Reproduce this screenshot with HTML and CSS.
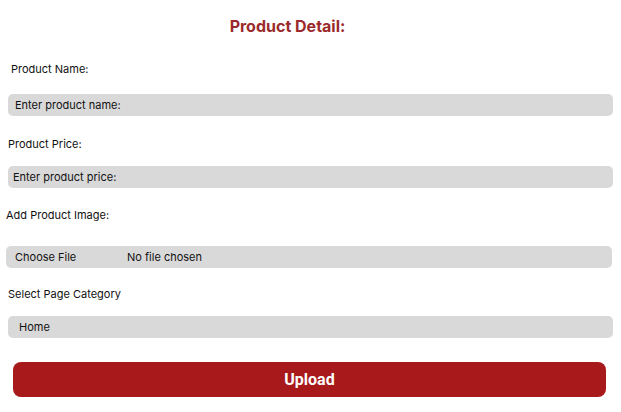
FILE: index.html
```html
<!DOCTYPE html>
<html>
<head>
<meta charset="utf-8">
<link rel="stylesheet" href="styles.css">
</head>
<body>
<form class="form">
  <h1 class="title">Product Detail:</h1>
  <label class="label label-name">Product Name:</label>
  <div class="field field-name">Enter product name:</div>
  <label class="label label-price">Product Price:</label>
  <div class="field field-price">Enter product price:</div>
  <label class="label label-image">Add Product Image:</label>
  <div class="field field-file"><span class="choose">Choose File</span><span class="nofile">No file chosen</span></div>
  <label class="label label-cat">Select Page Category</label>
  <div class="field field-select">Home</div>
  <button type="button" class="upload">Upload</button>
</form>
</body>
</html>
```

FILE: styles.css
```css
html, body {
  margin: 0;
  padding: 0;
  background: #ffffff;
}
body {
  font-family: Inter, "Noto Sans", sans-serif;
  color: #111111;
  width: 621px;
  height: 412px;
  overflow: hidden;
}
.form {
  display: flex;
  flex-direction: column;
  align-items: flex-start;
}
.title {
  margin: 16px 0 0 0;
  width: 575px;
  text-align: center;
  font-size: 16px;
  line-height: 20px;
  font-weight: 700;
  color: #9a2a2c;
}
.label {
  font-size: 11px;
  line-height: 14px;
  color: #111;
}
.label-name { margin: 26px 0 0 11px; }
.label-price { margin: 21px 0 0 8px; }
.label-image { margin: 20px 0 0 6px; }
.label-cat { margin: 19px 0 0 8px; }
.field {
  box-sizing: border-box;
  width: 605px;
  height: 22px;
  background: #d9d9d9;
  border-radius: 5px;
  font-size: 11px;
  line-height: 22px;
  color: #111;
  display: flex;
  align-items: center;
}
.field-name { margin: 18px 0 0 8px; padding-left: 7px; }
.field-price { margin: 15px 0 0 8px; padding-left: 5px; }
.field-file { margin: 24px 0 0 6px; padding-left: 9px; width: 606px; }
.field-select { margin: 15px 0 0 8px; padding-left: 11px; }
.choose { width: 112px; }
.upload {
  margin: 24px 0 0 13px;
  width: 593px;
  height: 35px;
  border: none;
  border-radius: 8px;
  background: #a8191b;
  color: #ffffff;
  font-family: Roboto, Inter, sans-serif;
  font-size: 16px;
  font-weight: 700;
  padding: 0;
}
```
